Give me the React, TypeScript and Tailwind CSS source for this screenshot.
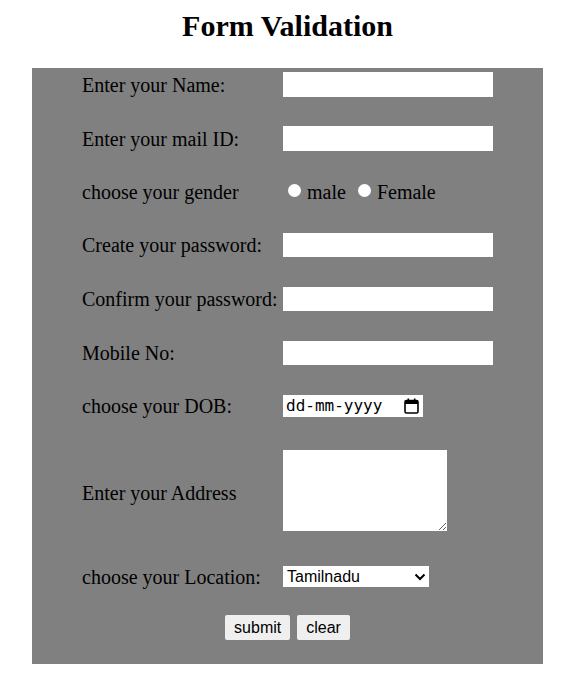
import React from "react";

const serif = "font-['Liberation_Serif','Times_New_Roman',serif]";
const sans = "font-['Liberation_Sans',Arial,sans-serif]";

function Label({ children }: { children: React.ReactNode }) {
  return <div className="w-[201px] shrink-0 text-[20px] leading-none text-black">{children}</div>;
}

function TextBox() {
  return <input type="text" className="w-[210px] h-[25px] bg-white border-0 outline-none px-1" />;
}

function Radio({ label }: { label: string }) {
  return (
    <label className="flex items-center">
      <span className="w-[13px] h-[13px] rounded-full bg-white ml-[5px] mr-[6px] mb-[3px]" />
      <span>{label}</span>
    </label>
  );
}

export default function App() {
  return (
    <div className={`min-h-screen bg-white ${serif}`}>
      <h1 className="text-center text-[30px] font-bold leading-[37px] pt-[7px] text-black">Form Validation</h1>

      <form className="w-[511px] mx-auto mt-[24px] bg-[#808080] pl-[50px] pt-[4px] pb-[24px]">
        <div className="flex items-center h-[25px]">
          <Label>Enter your Name:</Label>
          <TextBox />
        </div>

        <div className="flex items-center h-[25px] mt-[29px]">
          <Label>Enter your mail ID:</Label>
          <TextBox />
        </div>

        <div className="flex items-center h-[24px] mt-[29px]">
          <Label>choose your gender</Label>
          <div className="flex items-center text-[20px] leading-none text-black">
            <Radio label="male" />
            <span className="w-[7px]" />
            <Radio label="Female" />
          </div>
        </div>

        <div className="flex items-center h-[24px] mt-[29px]">
          <Label>Create your password:</Label>
          <input type="password" className="w-[210px] h-[24px] bg-white border-0 outline-none px-1" />
        </div>

        <div className="flex items-center h-[24px] mt-[30px]">
          <Label>Confirm your password:</Label>
          <input type="password" className="w-[210px] h-[24px] bg-white border-0 outline-none px-1" />
        </div>

        <div className="flex items-center h-[24px] mt-[30px]">
          <Label>Mobile No:</Label>
          <input type="text" className="w-[210px] h-[24px] bg-white border-0 outline-none px-1" />
        </div>

        <div className="flex items-center h-[22px] mt-[30px]">
          <Label>choose your DOB:</Label>
          <div className="w-[140px] h-[22px] bg-white flex items-center justify-between pl-[3px] pr-[4px]">
            <span className="font-['DejaVu_Sans_Mono',monospace] text-[16px] leading-none text-black">dd-mm-yyyy</span>
            <svg width="15" height="16" viewBox="0 0 15 16" fill="none">
              <rect x="1" y="2.5" width="13" height="12.5" rx="1.5" stroke="#000" strokeWidth="1.6" />
              <rect x="1" y="2.5" width="13" height="3.5" fill="#000" />
              <rect x="3.5" y="0.5" width="1.6" height="3" fill="#000" />
              <rect x="9.9" y="0.5" width="1.6" height="3" fill="#000" />
            </svg>
          </div>
        </div>

        <div className="flex items-center h-[81px] mt-[33px]">
          <Label><span className="block mt-[4px]">Enter your Address</span></Label>
          <textarea className="w-[164px] h-[81px] bg-white border-0 outline-none" />
        </div>

        <div className="flex items-center h-[21px] mt-[35px]">
          <Label>choose your Location:</Label>
          <div className={`w-[146px] h-[21px] bg-white flex items-center justify-between pl-[4px] pr-[3px] ${sans} text-[16px] leading-none text-black`}>
            <span>Tamilnadu</span>
            <svg width="12" height="8" viewBox="0 0 12 8" fill="none">
              <path d="M1.5 1.5 L6 6 L10.5 1.5" stroke="#000" strokeWidth="2" />
            </svg>
          </div>
        </div>

        <div className={`flex justify-center gap-[7px] mt-[28px] -ml-[50px] ${sans}`}>
          <button type="button" className="h-[25px] px-[9px] bg-[#efefef] rounded-[2px] text-[16px] leading-none text-black">
            submit
          </button>
          <button type="button" className="h-[25px] px-[9px] bg-[#efefef] rounded-[2px] text-[16px] leading-none text-black">
            clear
          </button>
        </div>
      </form>
    </div>
  );
}
